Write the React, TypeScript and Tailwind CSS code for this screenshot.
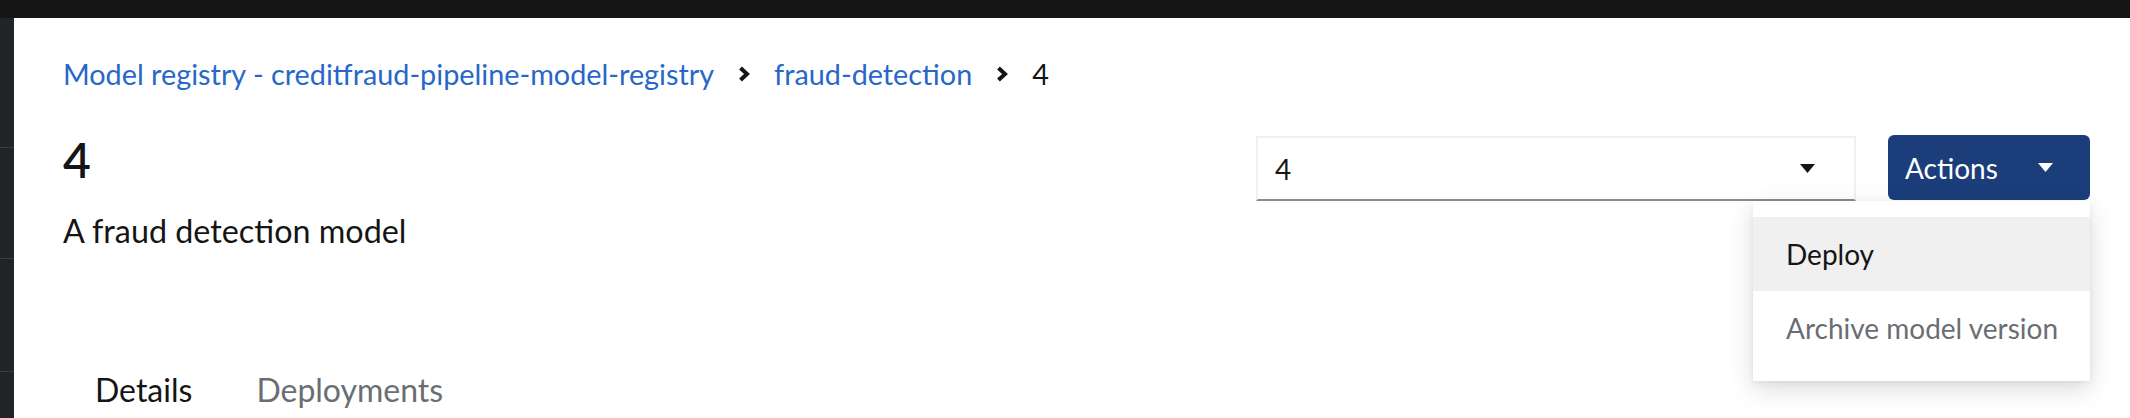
import React from "react";

const font = { fontFamily: '"Lato", "Noto Sans", sans-serif' };

const Chevron = () => (
  <svg width="12" height="16" viewBox="0 0 12 16" className="mx-[24px] shrink-0">
    <polyline
      points="2.5,2 9,8 2.5,14"
      fill="none"
      stroke="#151515"
      strokeWidth="4"
      strokeLinejoin="miter"
    />
  </svg>
);

const Caret = ({ color }: { color: string }) => (
  <svg width="15" height="9" viewBox="0 0 15 9">
    <polygon points="0,0 15,0 7.5,9" fill={color} />
  </svg>
);

const App = () => {
  const [open] = React.useState(true);

  return (
    <div
      className="w-[2130px] h-[418px] overflow-hidden bg-white flex flex-col text-[#151515]"
      style={font}
    >
      <div className="h-[18px] bg-[#151515] shrink-0" />
      <div className="flex flex-1">
        {/* sidebar edge */}
        <aside className="w-[14px] bg-[#212427] flex flex-col shrink-0">
          <div className="h-[130px] border-b border-[#3c3f42]" />
          <div className="h-[111px] border-b border-[#3c3f42]" />
          <div className="h-[113px] border-b border-[#3c3f42]" />
        </aside>

        <main className="flex-1 pl-[49px] pr-[40px] pt-[35px]">
          <nav className="flex items-center text-[28.8px] leading-[42px] whitespace-nowrap">
            <a className="text-[#2767c8]">
              Model registry - creditfraud-pipeline-model-registry
            </a>
            <Chevron />
            <a className="text-[#2767c8]">fraud-detection</a>
            <Chevron />
            <span>4</span>
          </nav>

          <div className="flex justify-between items-start mt-[37px]">
            <div className="flex flex-col">
              <h1 className="text-[48px] leading-[56px] font-semibold">4</h1>
              <p className="text-[32.3px] leading-[48px] mt-[19px]">
                A fraud detection model
              </p>
            </div>

            <div className="flex items-start gap-[32px] pt-[3px]">
              <div className="mt-[1px] w-[600px] h-[65px] flex items-center justify-between pl-[17px] pr-[39px] border-2 border-[#f0f0f0] border-b-[#8a8d90] text-[28px]">
                <span>4</span>
                <Caret color="#151515" />
              </div>

              <div className="relative">
                <button className="w-[202px] h-[65px] rounded-[6px] bg-[#1b3e7b] text-white flex items-center pl-[17px] text-[28px]">
                  <span>Actions</span>
                  <span className="ml-[40px] flex">
                    <Caret color="#ffffff" />
                  </span>
                </button>
                {open && (
                  <ul className="absolute right-0 top-[66px] w-[337px] bg-white py-[16px] shadow-[0_8px_24px_rgba(3,3,3,0.14),0_2px_6px_rgba(3,3,3,0.06)] z-10 text-[28px] leading-[42px] whitespace-nowrap">
                    <li className="h-[74px] flex items-center px-[33px] bg-[#f0f0f0]">
                      Deploy
                    </li>
                    <li className="h-[74px] flex items-center pl-[33px] text-[#6a6e73]">
                      Archive model version
                    </li>
                  </ul>
                )}
              </div>
            </div>
          </div>

          <div className="flex mt-[95px] text-[32px] leading-[48px]">
            <button className="px-[32px] pt-[16px]">Details</button>
            <button className="px-[32px] pt-[16px] text-[#6a6e73]">
              Deployments
            </button>
          </div>
        </main>
      </div>
    </div>
  );
};

export default App;
